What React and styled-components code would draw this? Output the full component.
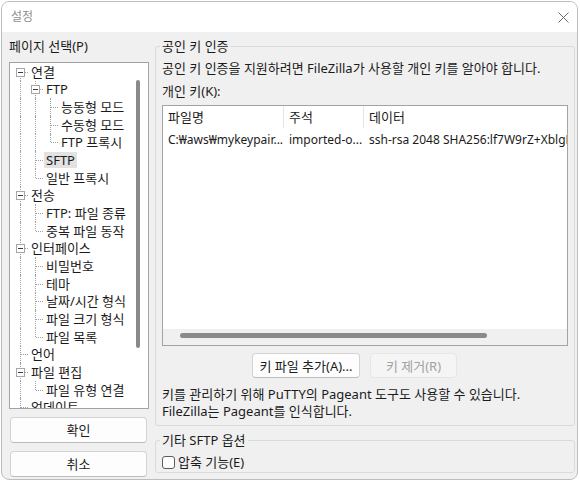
import React from 'react';
import styled, { createGlobalStyle } from 'styled-components';

const Global = createGlobalStyle`
  html, body { margin: 0; padding: 0; background: #ffffff; }
  body {
    font-family: "Noto Sans", "Noto Sans CJK KR", sans-serif;
    font-size: 13px;
    color: #1b1b1b;
  }
  * { box-sizing: border-box; }
`;

const Window = styled.div`
  margin: 1px 0 0 1px;
  width: 577px;
  height: 479px;
  border: 1px solid #bdbdbd;
  border-radius: 8px;
  background: #f0f0f0;
  overflow: hidden;
  display: flex;
  flex-direction: column;
`;

const TitleBar = styled.div`
  height: 30px;
  flex: none;
  background: #ffffff;
  display: flex;
  align-items: center;
  justify-content: space-between;
  padding: 0 8px 0 9px;
`;

const TitleText = styled.span`
  color: #8f8f8f;
  font-size: 12px;
  line-height: 16px;
`;

const CloseIcon = styled.svg`
  width: 11px;
  height: 11px;
  display: block;
`;

const Body = styled.div`
  flex: 1;
  display: flex;
  gap: 6px;
  padding: 6px 2px 2px 7px;
  min-height: 0;
`;

const LeftColumn = styled.div`
  width: 140px;
  flex: none;
  display: flex;
  flex-direction: column;
`;

const Label = styled.div`
  line-height: 16px;
  margin-bottom: 8px;
`;

const TreeBox = styled.div`
  height: 347px;
  border: 1px solid #a3a3a3;
  background: #ffffff;
  display: flex;
  overflow: hidden;
`;

const TreeList = styled.div`
  flex: 1;
  overflow: hidden;
  padding-left: 3px;
  min-width: 0;
`;

const TreeRow = styled.div`
  height: 17.67px;
  display: flex;
  align-items: center;
  white-space: nowrap;
`;

const Cell = styled.span`
  position: relative;
  width: 15px;
  height: 100%;
  flex: none;

  &::before {
    content: '';
    display: ${(p) => (p.$vTop || p.$vBottom ? 'block' : 'none')};
    position: absolute;
    left: 7px;
    top: ${(p) => (p.$vTop ? '0' : '50%')};
    bottom: ${(p) => (p.$vBottom ? '0' : '50%')};
    border-left: 1px dotted #a0a0a0;
  }

  &::after {
    content: '';
    display: ${(p) => (p.$h ? 'block' : 'none')};
    position: absolute;
    left: 8px;
    right: 0;
    top: 50%;
    border-top: 1px dotted #a0a0a0;
  }
`;

const Expander = styled.span`
  position: absolute;
  z-index: 1;
  left: 3px;
  top: calc(50% - 4px);
  width: 9px;
  height: 9px;
  border: 1px solid #a6a6a6;
  background: #ffffff;

  &::after {
    content: '';
    position: absolute;
    left: 1px;
    right: 1px;
    top: 3px;
    height: 1px;
    background: #3c3c3c;
  }
`;

const NodeLabel = styled.span`
  margin-left: 1px;
  padding: 0 2px;
  line-height: 16px;
  background: ${(p) => (p.$selected ? '#e2e2e2' : 'transparent')};
`;

const VScroll = styled.div`
  width: 14px;
  flex: none;
`;

const VThumb = styled.div`
  margin: 17px 0 0 2px;
  width: 4px;
  height: 268px;
  border-radius: 2px;
  background: #8a8a8a;
`;

const ButtonStack = styled.div`
  display: flex;
  flex-direction: column;
  gap: 8px;
  margin-top: 8px;
  padding: 0 2px 0 1px;
`;

const Button = styled.button`
  font: inherit;
  color: ${(p) => (p.disabled ? '#a2a2a2' : '#1b1b1b')};
  height: ${(p) => p.$h || 26}px;
  width: ${(p) => (p.$w ? `${p.$w}px` : 'auto')};
  background: ${(p) => (p.disabled ? '#f5f5f5' : '#fdfdfd')};
  border: 1px solid ${(p) => (p.disabled ? '#e6e6e6' : '#d3d3d3')};
  border-bottom-color: ${(p) => (p.disabled ? '#e6e6e6' : '#bcbcbc')};
  border-radius: 4px;
  padding: 0;
  line-height: 16px;
  white-space: nowrap;
`;

const RightColumn = styled.div`
  flex: 1;
  min-width: 0;
  display: flex;
  flex-direction: column;
`;

const GroupBox = styled.fieldset`
  margin: ${(p) => p.$mt || 0}px 0 0 0;
  padding: ${(p) => p.$pad};
  border: 1px solid #dadada;
  border-radius: 3px;
  min-width: 0;
`;

const Legend = styled.legend`
  padding: 0 2px;
  margin-left: -2px;
  line-height: 16px;
`;

const Text = styled.div`
  line-height: ${(p) => p.$lh || 16}px;
  margin-top: ${(p) => p.$mt || 0}px;
  white-space: nowrap;
`;

const ListBox = styled.div`
  margin-top: 6px;
  height: 241px;
  margin-right: 6px;
  border: 1px solid #a3a3a3;
  background: #ffffff;
  display: flex;
  flex-direction: column;
  overflow: hidden;
`;

const HeaderRow = styled.div`
  display: flex;
  height: 22px;
  flex: none;
`;

const HeaderCell = styled.div`
  width: ${(p) => (p.$w ? `${p.$w}px` : 'auto')};
  flex: ${(p) => (p.$w ? 'none' : '1')};
  padding: 1px 0 0 5px;
  line-height: 21px;
  border-right: ${(p) => (p.$w ? '1px solid #e5e5e5' : 'none')};
  white-space: nowrap;
`;

const DataRow = styled.div`
  display: flex;
  height: 20px;
  margin-top: 2px;
  flex: none;
  font-size: 12px;
`;

const DataCell = styled.div`
  width: ${(p) => (p.$w ? `${p.$w}px` : 'auto')};
  flex: ${(p) => (p.$w ? 'none' : '1')};
  padding-left: 5px;
  line-height: 20px;
  white-space: nowrap;
  overflow: hidden;
`;

const Spacer = styled.div`
  flex: 1;
`;

const HScroll = styled.div`
  height: 16px;
  flex: none;
  background: #f0f0f0;
  padding: 4px 0 0 17px;
`;

const HThumb = styled.div`
  width: 307px;
  height: 5px;
  border-radius: 3px;
  background: #8a8a8a;
`;

const KeyButtons = styled.div`
  display: flex;
  gap: 10px;
  margin-top: 7px;
  padding-left: 90px;
`;

const CheckRow = styled.label`
  display: flex;
  align-items: center;
  height: 16px;
  line-height: 16px;
`;

const CheckBox = styled.span`
  width: 13px;
  height: 13px;
  border: 1px solid #5c5c5c;
  border-radius: 3px;
  background: #ffffff;
  margin-right: 3px;
  flex: none;
`;

const tree = [
  {
    label: '연결',
    children: [
      { label: 'FTP', children: [{ label: '능동형 모드' }, { label: '수동형 모드' }, { label: 'FTP 프록시' }] },
      { label: 'SFTP', selected: true },
      { label: '일반 프록시' },
    ],
  },
  { label: '전송', children: [{ label: 'FTP: 파일 종류' }, { label: '중복 파일 동작' }] },
  {
    label: '인터페이스',
    children: [
      { label: '비밀번호' },
      { label: '테마' },
      { label: '날짜/시간 형식' },
      { label: '파일 크기 형식' },
      { label: '파일 목록' },
    ],
  },
  { label: '언어' },
  { label: '파일 편집', children: [{ label: '파일 유형 연결' }] },
  { label: '업데이트', more: true },
];

function flatten(nodes, ancestors = [], out = []) {
  nodes.forEach((n, i) => {
    const hasNext = i < nodes.length - 1 || !!n.more;
    const isFirstRoot = ancestors.length === 0 && i === 0;
    out.push({ ...n, ancestors, hasNext, isFirstRoot, key: out.length });
    if (n.children) flatten(n.children, [...ancestors, hasNext], out);
  });
  return out;
}

const rows = flatten(tree);

function Tree() {
  return (
    <TreeList>
      {rows.map((r) => (
        <TreeRow key={r.key}>
          {r.ancestors.map((cont, i) => (
            <Cell key={i} $vTop={cont} $vBottom={cont} />
          ))}
          <Cell $vTop={!r.isFirstRoot} $vBottom={r.hasNext} $h>
            {r.children && <Expander />}
          </Cell>
          <NodeLabel $selected={r.selected}>{r.label}</NodeLabel>
        </TreeRow>
      ))}
    </TreeList>
  );
}

export default function App() {
  return (
    <>
      <Global />
      <Window>
        <TitleBar>
          <TitleText>설정</TitleText>
          <CloseIcon viewBox="0 0 11 11">
            <path d="M0.5 0.5 L10.5 10.5 M10.5 0.5 L0.5 10.5" stroke="#6a6a6a" strokeWidth="1" fill="none" />
          </CloseIcon>
        </TitleBar>
        <Body>
          <LeftColumn>
            <Label>페이지 선택(P)</Label>
            <TreeBox>
              <Tree />
              <VScroll>
                <VThumb />
              </VScroll>
            </TreeBox>
            <ButtonStack>
              <Button>확인</Button>
              <Button>취소</Button>
            </ButtonStack>
          </LeftColumn>
          <RightColumn>
            <GroupBox $pad="6px 0 5px 6px">
              <Legend>공인 키 인증</Legend>
              <Text>공인 키 인증을 지원하려면 FileZilla가 사용할 개인 키를 알아야 합니다.</Text>
              <Text $mt={7}>개인 키(K):</Text>
              <ListBox>
                <HeaderRow>
                  <HeaderCell $w={121}>파일명</HeaderCell>
                  <HeaderCell $w={80}>주석</HeaderCell>
                  <HeaderCell>데이터</HeaderCell>
                </HeaderRow>
                <DataRow>
                  <DataCell $w={121}>C:₩aws₩mykeypair...</DataCell>
                  <DataCell $w={80}>imported-o...</DataCell>
                  <DataCell>ssh-rsa 2048 SHA256:lf7W9rZ+XblgPq0mN3</DataCell>
                </DataRow>
                <Spacer />
                <HScroll>
                  <HThumb />
                </HScroll>
              </ListBox>
              <KeyButtons>
                <Button $w={108} $h={25}>키 파일 추가(A)...</Button>
                <Button $w={87} $h={25} disabled>키 제거(R)</Button>
              </KeyButtons>
              <Text $lh={17} $mt={8}>
                키를 관리하기 위해 PuTTY의 Pageant 도구도 사용할 수 있습니다.
                <br />
                FileZilla는 Pageant를 인식합니다.
              </Text>
            </GroupBox>
            <GroupBox $mt={6} $pad="6px 6px 2px 6px">
              <Legend>기타 SFTP 옵션</Legend>
              <CheckRow>
                <CheckBox />
                압축 기능(E)
              </CheckRow>
            </GroupBox>
          </RightColumn>
        </Body>
      </Window>
    </>
  );
}
